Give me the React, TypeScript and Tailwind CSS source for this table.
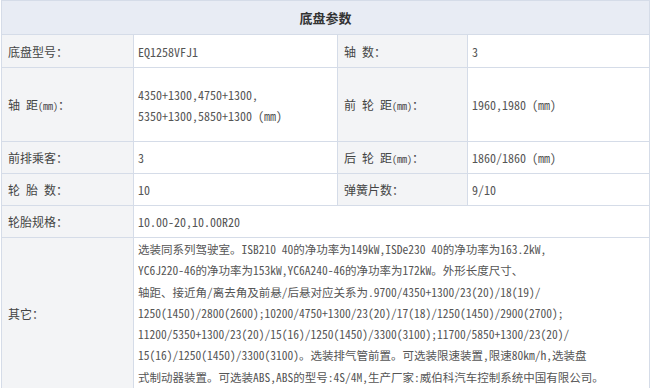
import React from "react";

const font = {
  fontFamily:
    '"Noto Sans Mono CJK SC", "Noto Sans CJK SC", "Liberation Mono", monospace',
};

const Label = ({ children }: { children: React.ReactNode }) => (
  <td className="border border-[#d5dce8] bg-[#f3f4f6] pl-[6px] align-middle text-[#444] whitespace-nowrap">
    {children}
  </td>
);

const Value = ({
  children,
  colSpan,
}: {
  children: React.ReactNode;
  colSpan?: number;
}) => (
  <td
    colSpan={colSpan}
    className="border border-[#d5dce8] bg-white pl-[4px] align-middle text-[#555] whitespace-nowrap"
  >
    {children}
  </td>
);

const otherLines = [
  "选装同系列驾驶室。ISB210 40的净功率为149kW,ISDe230 40的净功率为163.2kW,",
  "YC6J220-46的净功率为153kW,YC6A240-46的净功率为172kW。外形长度尺寸、",
  "轴距、接近角/离去角及前悬/后悬对应关系为.9700/4350+1300/23(20)/18(19)/",
  "1250(1450)/2800(2600);10200/4750+1300/23(20)/17(18)/1250(1450)/2900(2700);",
  "11200/5350+1300/23(20)/15(16)/1250(1450)/3300(3100);11700/5850+1300/23(20)/",
  "15(16)/1250(1450)/3300(3100)。选装排气管前置。可选装限速装置,限速80km/h,选装盘",
  "式制动器装置。可选装ABS,ABS的型号:4S/4M,生产厂家:威伯科汽车控制系统中国有限公司。",
];

export default function App() {
  return (
    <div className="w-[650px] h-[388px] overflow-hidden bg-white" style={font}>
      <table className="ml-px w-[648px] border-collapse table-fixed text-[12px] leading-[21px]">
        <colgroup>
          <col className="w-[132px]" />
          <col className="w-[204px]" />
          <col className="w-[130px]" />
          <col className="w-[182px]" />
        </colgroup>
        <tbody>
          <tr className="h-[34px]">
            <td
              colSpan={4}
              className="border border-[#d5dce8] bg-[#e8ecf4] text-center text-[13px] font-bold text-[#333]"
            >
              底盘参数
            </td>
          </tr>
          <tr className="h-[33px]">
            <Label>底盘型号：</Label>
            <Value>EQ1258VFJ1</Value>
            <Label>轴 数：</Label>
            <Value>3</Value>
          </tr>
          <tr className="h-[74px]">
            <Label>
              轴 距<span className="text-[10px]">(mm)</span>：
            </Label>
            <Value>
              4350+1300,4750+1300,
              <br />
              5350+1300,5850+1300 (mm)
            </Value>
            <Label>
              前 轮 距<span className="text-[10px]">(mm)</span>：
            </Label>
            <Value>1960,1980 (mm)</Value>
          </tr>
          <tr className="h-[32px]">
            <Label>前排乘客：</Label>
            <Value>3</Value>
            <Label>
              后 轮 距<span className="text-[10px]">(mm)</span>：
            </Label>
            <Value>1860/1860 (mm)</Value>
          </tr>
          <tr className="h-[32px]">
            <Label>轮 胎 数：</Label>
            <Value>10</Value>
            <Label>弹簧片数：</Label>
            <Value>9/10</Value>
          </tr>
          <tr className="h-[32px]">
            <Label>轮胎规格：</Label>
            <Value colSpan={3}>10.00-20,10.00R20</Value>
          </tr>
          <tr>
            <Label>其它：</Label>
            <td
              colSpan={3}
              className="border border-[#d5dce8] bg-white pl-[4px] pt-[1px] align-top text-[11.5px] text-[#555] whitespace-nowrap leading-[21.3px]"
            >
              {otherLines.map((l, i) => (
                <div key={i}>{l}</div>
              ))}
            </td>
          </tr>
        </tbody>
      </table>
    </div>
  );
}
